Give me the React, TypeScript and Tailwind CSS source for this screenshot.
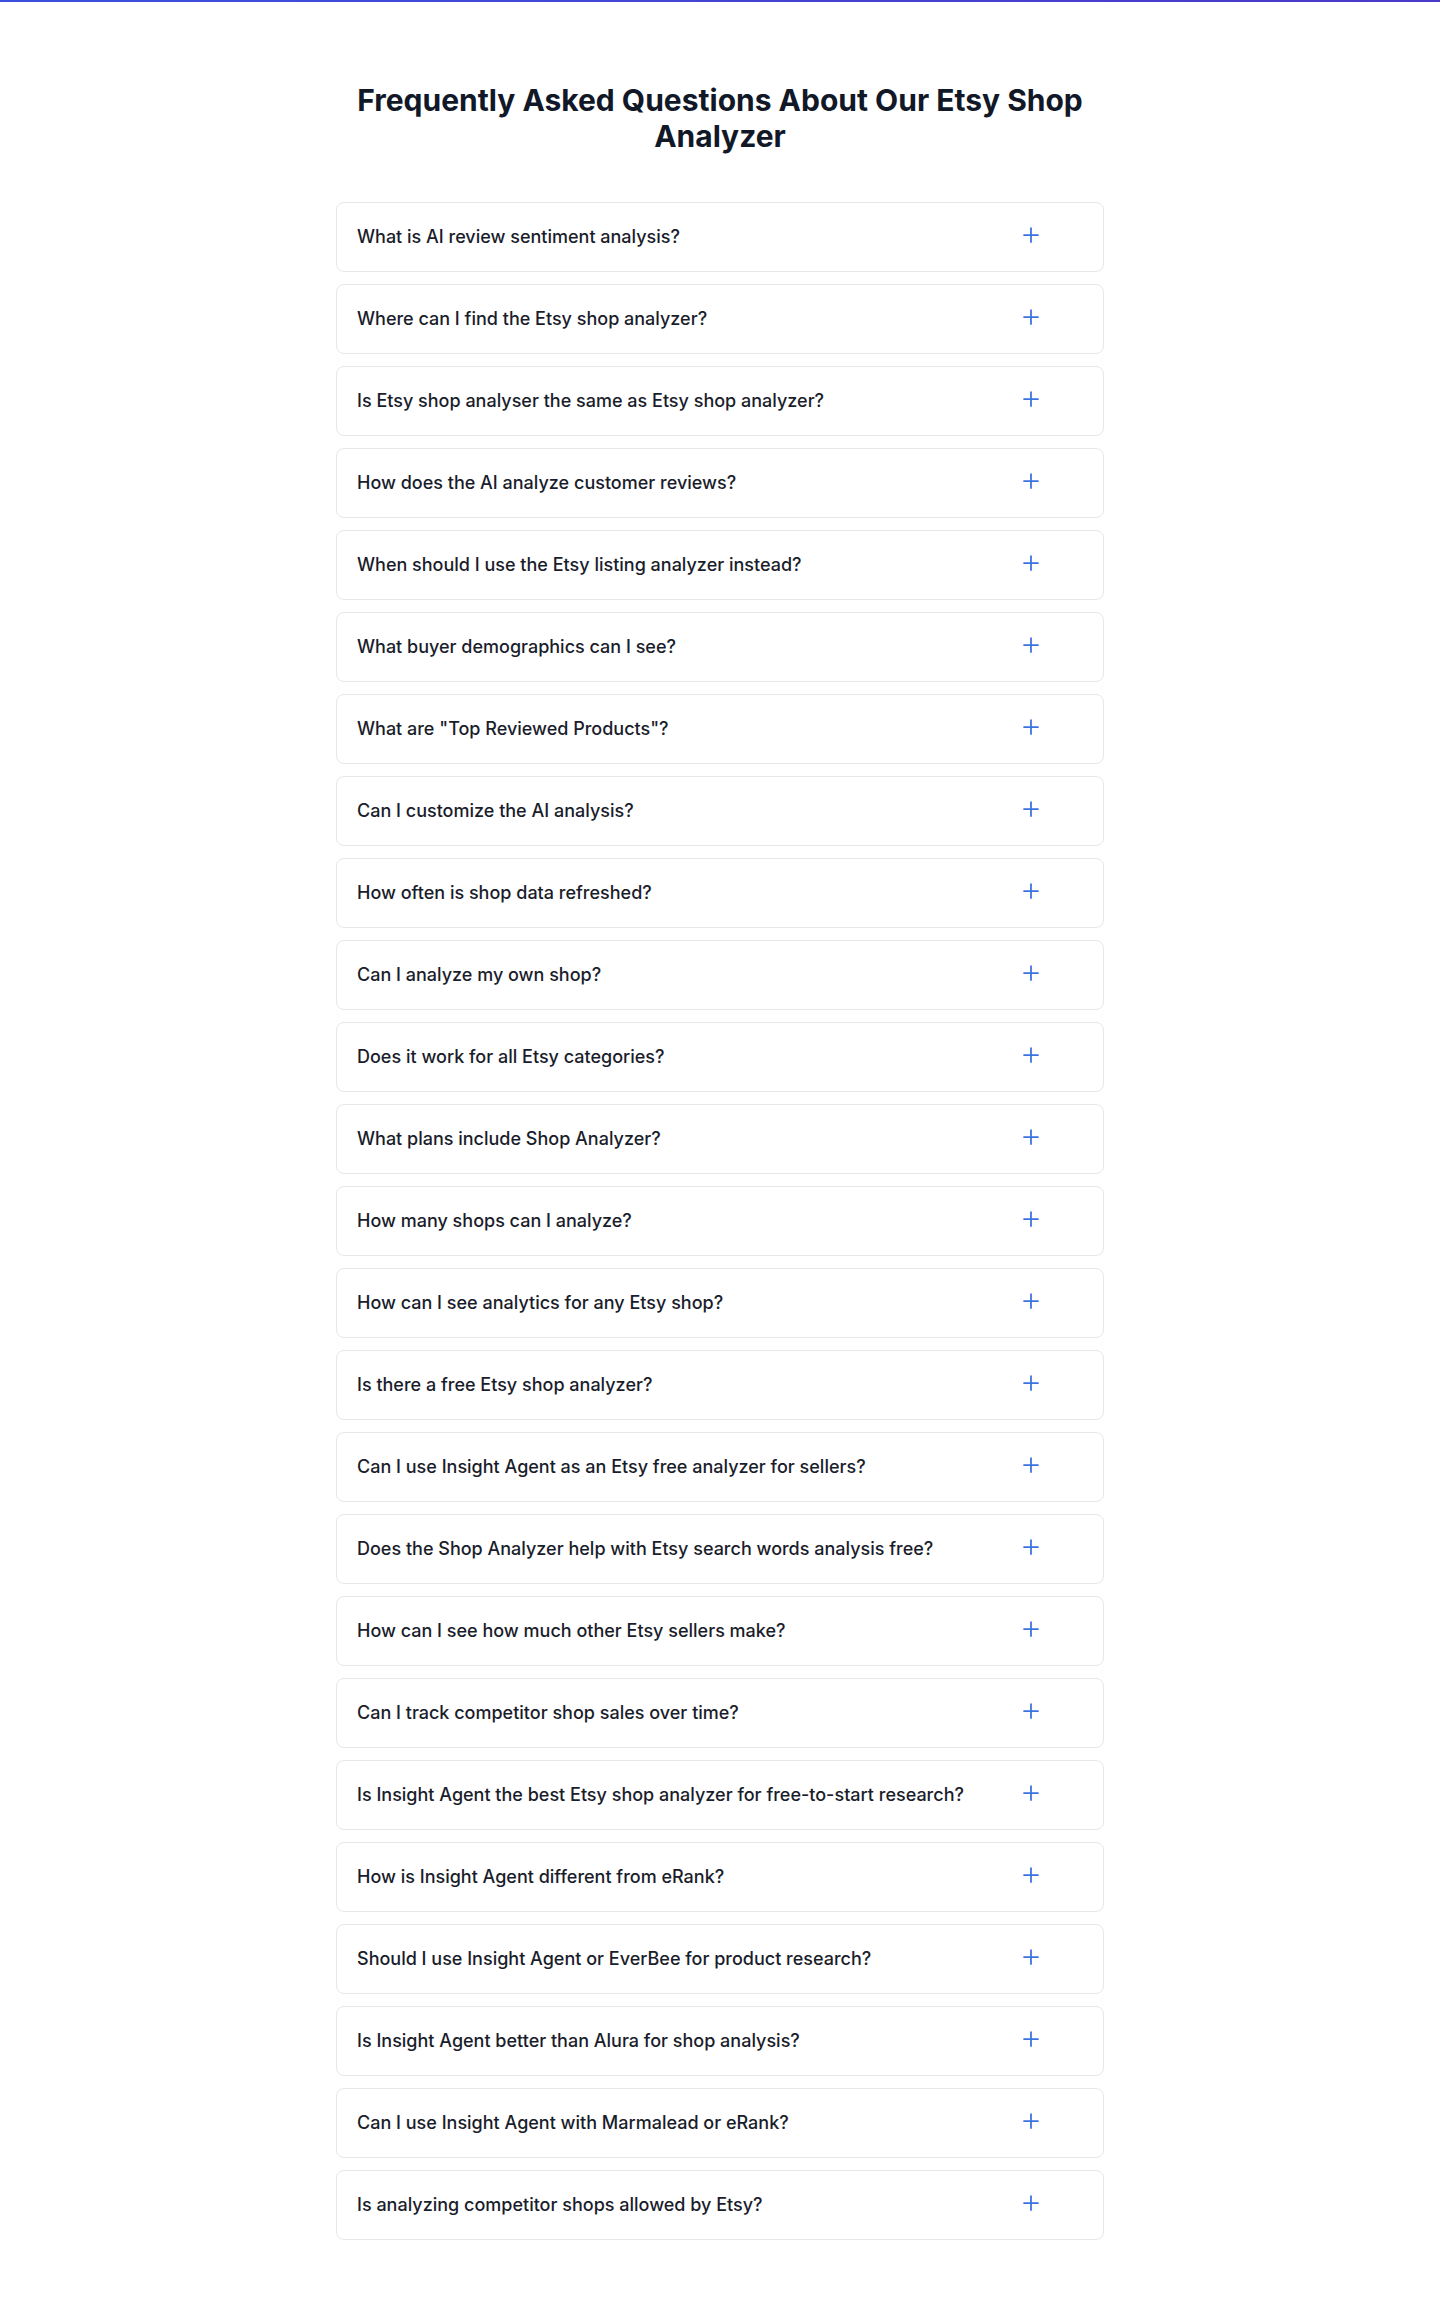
import React, { useState } from 'react';
import { Plus, Minus } from 'lucide-react';

const questions = [
  'What is AI review sentiment analysis?',
  'Where can I find the Etsy shop analyzer?',
  'Is Etsy shop analyser the same as Etsy shop analyzer?',
  'How does the AI analyze customer reviews?',
  'When should I use the Etsy listing analyzer instead?',
  'What buyer demographics can I see?',
  'What are "Top Reviewed Products"?',
  'Can I customize the AI analysis?',
  'How often is shop data refreshed?',
  'Can I analyze my own shop?',
  'Does it work for all Etsy categories?',
  'What plans include Shop Analyzer?',
  'How many shops can I analyze?',
  'How can I see analytics for any Etsy shop?',
  'Is there a free Etsy shop analyzer?',
  'Can I use Insight Agent as an Etsy free analyzer for sellers?',
  'Does the Shop Analyzer help with Etsy search words analysis free?',
  'How can I see how much other Etsy sellers make?',
  'Can I track competitor shop sales over time?',
  'Is Insight Agent the best Etsy shop analyzer for free-to-start research?',
  'How is Insight Agent different from eRank?',
  'Should I use Insight Agent or EverBee for product research?',
  'Is Insight Agent better than Alura for shop analysis?',
  'Can I use Insight Agent with Marmalead or eRank?',
  'Is analyzing competitor shops allowed by Etsy?',
];

const App: React.FC = () => {
  const [open, setOpen] = useState<number | null>(null);

  return (
    <div className="min-h-screen bg-white font-['Inter','Liberation_Sans',sans-serif]">
      {/* Top accent bar */}
      <div className="h-[2px] bg-gradient-to-r from-[#3b50e0] to-[#4a38c9]" />

      <section className="px-6 pt-20 pb-[72px]">
        <div className="max-w-3xl mx-auto">
          <h2 className="text-3xl font-bold text-[#111827] text-center mb-12">
            Frequently Asked Questions About Our Etsy Shop Analyzer
          </h2>

          <div className="space-y-3">
            {questions.map((q, i) => (
              <div key={i} className="bg-white border border-[#e5e7eb] rounded-lg">
                <button
                  onClick={() => setOpen(open === i ? null : i)}
                  className="w-full flex items-center justify-between text-left px-5 py-5"
                >
                  <span className="text-lg font-medium text-[#1a1d2b]">{q}</span>
                  <span className="ml-4 mr-10 mb-1 text-[#3a72e0]">
                    {open === i ? <Minus className="w-6 h-6" strokeWidth={1.75} /> : <Plus className="w-6 h-6" strokeWidth={1.75} />}
                  </span>
                </button>
              </div>
            ))}
          </div>
        </div>
      </section>
    </div>
  );
};

export default App;
